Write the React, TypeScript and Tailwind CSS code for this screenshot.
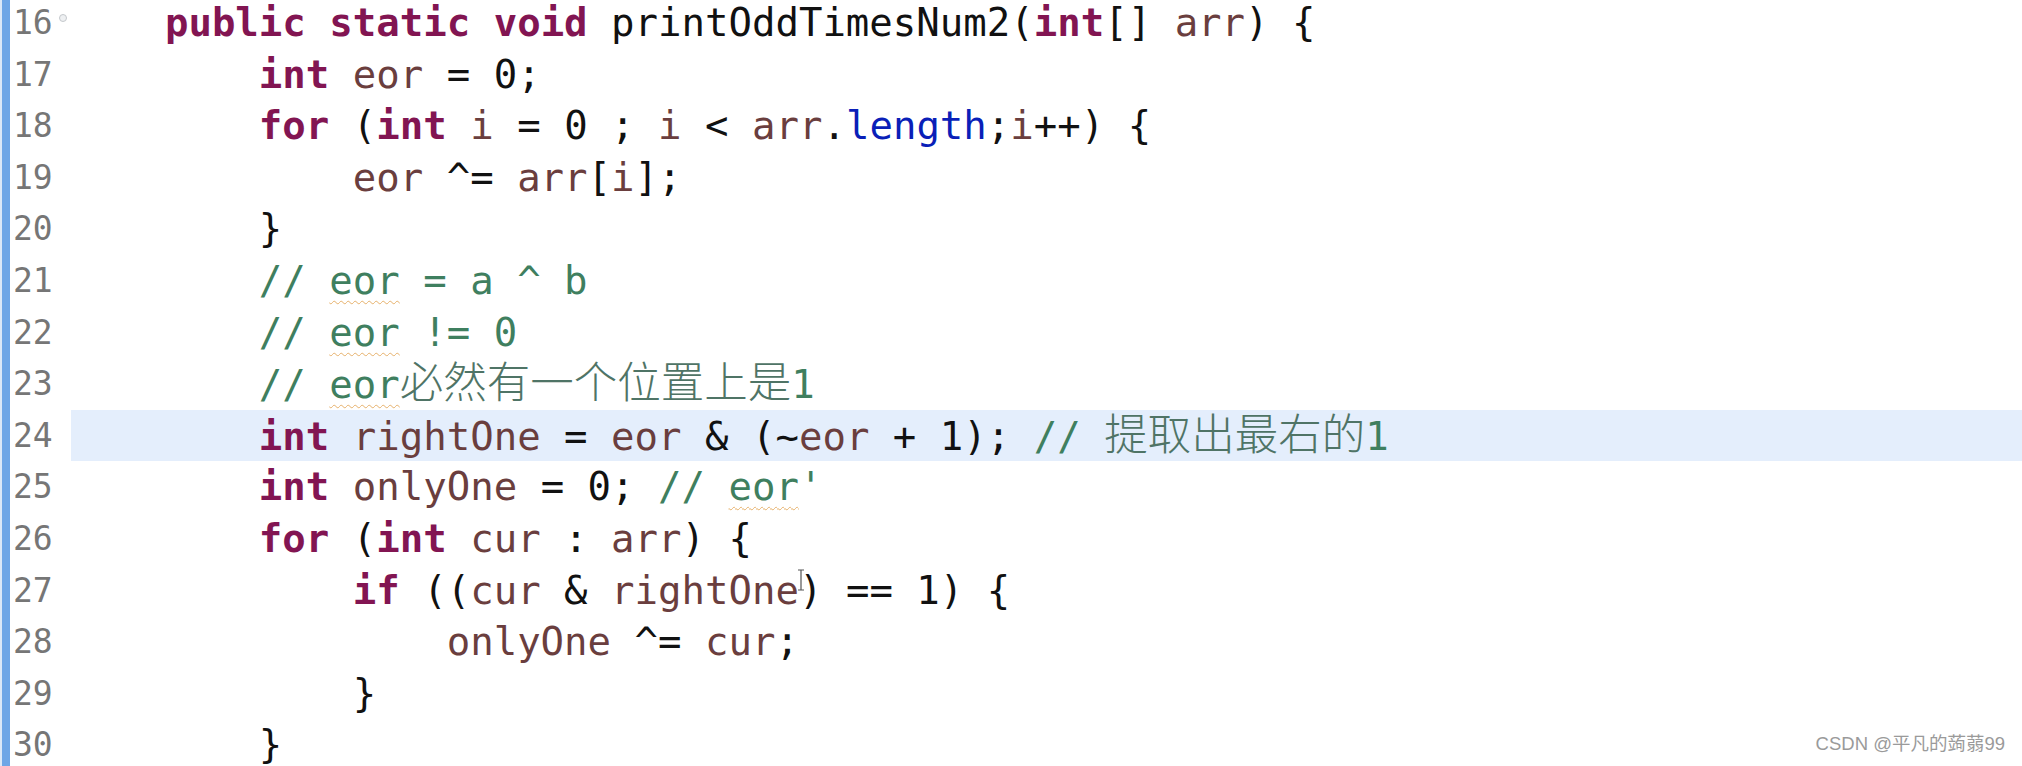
import React from 'react';

type Kind = 'p' | 'k' | 'v' | 'f' | 'c' | 's' | 'z';
type Tok = [Kind, string];

const lines: { n: number; toks: Tok[]; active?: boolean; fold?: boolean; cursor?: boolean }[] = [
    {
        n: 16,
        fold: true,
        toks: [['p', '    '], ['k', 'public'], ['p', ' '], ['k', 'static'], ['p', ' '], ['k', 'void'], ['p', ' printOddTimesNum2('], ['k', 'int'], ['p', '[] '], ['v', 'arr'], ['p', ') {']],
    },
    { n: 17, toks: [['p', '        '], ['k', 'int'], ['p', ' '], ['v', 'eor'], ['p', ' = 0;']] },
    {
        n: 18,
        toks: [['p', '        '], ['k', 'for'], ['p', ' ('], ['k', 'int'], ['p', ' '], ['v', 'i'], ['p', ' = 0 ; '], ['v', 'i'], ['p', ' < '], ['v', 'arr'], ['p', '.'], ['f', 'length'], ['p', ';'], ['v', 'i'], ['p', '++) {']],
    },
    { n: 19, toks: [['p', '            '], ['v', 'eor'], ['p', ' ^= '], ['v', 'arr'], ['p', '['], ['v', 'i'], ['p', '];']] },
    { n: 20, toks: [['p', '        }']] },
    { n: 21, toks: [['p', '        '], ['c', '// '], ['s', 'eor'], ['c', ' = a ^ b']] },
    { n: 22, toks: [['p', '        '], ['c', '// '], ['s', 'eor'], ['c', ' != 0']] },
    { n: 23, toks: [['p', '        '], ['c', '// '], ['s', 'eor'], ['z', '必然有一个位置上是'], ['c', '1']] },
    {
        n: 24,
        active: true,
        toks: [['p', '        '], ['k', 'int'], ['p', ' '], ['v', 'rightOne'], ['p', ' = '], ['v', 'eor'], ['p', ' & (~'], ['v', 'eor'], ['p', ' + 1); '], ['c', '// '], ['z', '提取出最右的'], ['c', '1']],
    },
    { n: 25, toks: [['p', '        '], ['k', 'int'], ['p', ' '], ['v', 'onlyOne'], ['p', ' = 0; '], ['c', '// '], ['s', 'eor'], ['c', "'"]] },
    { n: 26, toks: [['p', '        '], ['k', 'for'], ['p', ' ('], ['k', 'int'], ['p', ' '], ['v', 'cur'], ['p', ' : '], ['v', 'arr'], ['p', ') {']] },
    {
        n: 27,
        cursor: true,
        toks: [['p', '            '], ['k', 'if'], ['p', ' (('], ['v', 'cur'], ['p', ' & '], ['v', 'rightOne'], ['p', ') == 1) {']],
    },
    { n: 28, toks: [['p', '                '], ['v', 'onlyOne'], ['p', ' ^= '], ['v', 'cur'], ['p', ';']] },
    { n: 29, toks: [['p', '            }']] },
    { n: 30, toks: [['p', '        }']] },
];

function Token({ kind, text }: { kind: Kind; text: string }) {
    switch (kind) {
        case 'k':
            return <span className="font-bold text-[#821552]">{text}</span>;
        case 'v':
            return <span className="text-[#6a3e3e]">{text}</span>;
        case 'f':
            return <span className="text-[#0a1fb8]">{text}</span>;
        case 'c':
            return <span className="text-[#3f7f5f]">{text}</span>;
        case 's':
            return (
                <span className="text-[#3f7f5f] underline decoration-wavy decoration-[#e6b06a] decoration-1 underline-offset-[6px]">
                    {text}
                </span>
            );
        case 'z':
            return (
                <span className="font-['Noto_Sans_CJK_SC',sans-serif] text-[43.5px] font-light leading-none text-[#4f7466]">
                    {text}
                </span>
            );
        default:
            return <span className="text-[#111]">{text}</span>;
    }
}

export default function App() {
    return (
        <div className="relative h-[766px] w-full overflow-hidden bg-white">
            <div className="-mt-[3px] flex flex-col">
                {lines.map((line) => (
                    <div key={line.n} className="flex h-[51.6px] leading-[51.6px]">
                        <div className="flex w-[71px] shrink-0">
                            <div className="w-[10px] shrink-0 border-l-2 border-[#dbe8f7] bg-[#6ea6e6]" />
                            <div className="relative flex-1 pl-[3px] font-['DejaVu_Sans_Mono',monospace] text-[33px] text-[#767676]">
                                {line.n}
                                {line.fold && (
                                    <span className="absolute left-[49px] top-[17px] h-[8px] w-[8px] rounded-full border border-[#c4c8cc] bg-[#eef0f2]" />
                                )}
                            </div>
                        </div>
                        <div
                            className={`relative flex-1 whitespace-pre font-['DejaVu_Sans_Mono',monospace] text-[39px] ${
                                line.active ? 'bg-[#e4eefc]' : 'bg-white'
                            }`}
                        >
                            {line.toks.map(([k, t], i) => (
                                <Token key={i} kind={k} text={t} />
                            ))}
                            {line.cursor && (
                                <svg className="absolute left-[726px] top-[4px]" width="8" height="22" viewBox="0 0 8 22">
                                    <path d="M1 1h6M4 1v20M1 21h6" stroke="#555" strokeWidth="1.2" fill="none" />
                                </svg>
                            )}
                        </div>
                    </div>
                ))}
            </div>
            <div className="absolute bottom-[8px] right-[17px] font-['Liberation_Sans','Noto_Sans_CJK_SC',sans-serif] text-[18.5px] text-[#9a9a9a] [text-shadow:0_0_2px_#fff]">
                CSDN @平凡的蒟蒻99
            </div>
        </div>
    );
}
